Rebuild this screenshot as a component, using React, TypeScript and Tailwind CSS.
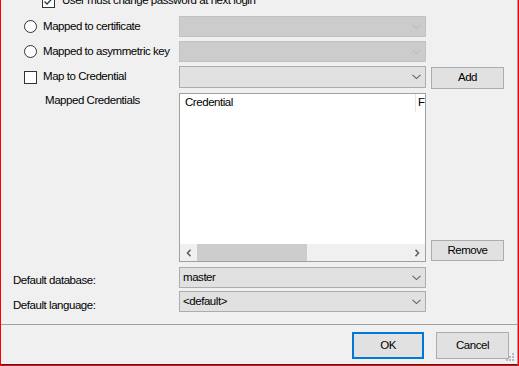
import React from "react";

const font = { fontFamily: '"Liberation Sans", Arial, sans-serif' };

function Chevron({ color }: { color: string }) {
  return (
    <svg width="9" height="6" viewBox="0 0 9 6">
      <path d="M0.5 0.8 L4.5 4.6 L8.5 0.8" fill="none" stroke={color} strokeWidth="1.1" />
    </svg>
  );
}

function Combo({ text, disabled, h = "h-[21px]" }: { text?: string; disabled?: boolean; h?: string }) {
  return (
    <div
      className={`w-[247px] ${h} shrink-0 flex items-center justify-between pl-[3px] pr-[4px] border ${
        disabled ? "bg-[#cccccc] border-[#c2c2c2]" : "bg-[#e1e1e1] border-[#adadad]"
      }`}
    >
      <span className="leading-none">{text}</span>
      <Chevron color={disabled ? "#bdbdbd" : "#606060"} />
    </div>
  );
}

function Btn({ label, className = "" }: { label: string; className?: string }) {
  return (
    <div
      className={`flex items-center justify-center bg-[#e1e1e1] border border-[#adadad] leading-none ${className}`}
    >
      {label}
    </div>
  );
}

function Radio() {
  return <div className="w-[13px] h-[13px] rounded-full border border-[#333333] bg-white shrink-0" />;
}

function CheckBox({ checked }: { checked?: boolean }) {
  return (
    <div className="w-[13px] h-[13px] border border-[#333333] bg-white shrink-0 flex items-center justify-center">
      {checked && (
        <svg width="11" height="11" viewBox="0 0 11 11">
          <path d="M1.5 5.5 L4 8 L9.5 2.2" fill="none" stroke="#333333" strokeWidth="1.3" />
        </svg>
      )}
    </div>
  );
}

export default function App() {
  return (
    <div
      className="w-[519px] h-[366px] bg-[#f0f0f0] border-l border-r border-b border-[#ff0000] overflow-hidden flex flex-col text-[11.5px] tracking-[-0.45px] text-[#000000]"
      style={font}
    >
      <div className="relative flex-1 flex flex-col border-r border-b border-r-[#a0a0a0] border-b-[#2b2b2b] overflow-hidden">
        {/* top checkbox */}
        <div className="-mt-[5px] h-[13px] flex items-center pl-[41px] gap-[7px] shrink-0">
          <CheckBox checked />
          <span className="leading-none -mt-[1px]">User must change password at next login</span>
        </div>

        {/* radio rows */}
        <div className="mt-[8px] h-[21px] flex items-center shrink-0">
          <div className="w-[178px] flex items-center pl-[23px] gap-[6px]">
            <Radio />
            <span className="leading-none">Mapped to certificate</span>
          </div>
          <Combo disabled />
        </div>
        <div className="mt-[4px] h-[21px] flex items-center shrink-0">
          <div className="w-[178px] flex items-center pl-[23px] gap-[6px]">
            <Radio />
            <span className="leading-none">Mapped to asymmetric key</span>
          </div>
          <Combo disabled />
        </div>

        {/* map to credential */}
        <div className="mt-[4px] h-[22px] flex items-start shrink-0">
          <div className="w-[178px] h-[22px] flex items-center pl-[23px] gap-[6px]">
            <CheckBox />
            <span className="leading-none">Map to Credential</span>
          </div>
          <Combo h="h-[22px]" />
          <Btn label="Add" className="ml-[5px] mt-[1px] w-[73px] h-[22px]" />
        </div>

        {/* mapped credentials list */}
        <div className="mt-[5px] h-[169px] flex shrink-0">
          <div className="w-[178px] pl-[44px] pt-[2px] leading-none">Mapped Credentials</div>
          <div className="w-[247px] h-[169px] border border-[#a0a0a0] bg-white flex flex-col overflow-hidden">
            <div className="h-[18px] flex shrink-0 overflow-hidden">
              <div className="w-[236px] shrink-0 border-r border-[#e5e5e5] pl-[5px] pt-[3px] leading-none">Credential</div>
              <div className="pl-[2px] pt-[3px] leading-none">F</div>
            </div>
            <div className="flex-1" />
            <div className="h-[17px] flex bg-[#f0f0f0] shrink-0">
              <div className="w-[17px] flex items-center justify-center">
                <svg width="6" height="8" viewBox="0 0 6 8">
                  <path d="M4.5 0.8 L1.5 4 L4.5 7.2" fill="none" stroke="#606060" strokeWidth="1.6" />
                </svg>
              </div>
              <div className="w-[110px] bg-[#cdcdcd]" />
              <div className="flex-1" />
              <div className="w-[17px] flex items-center justify-center">
                <svg width="6" height="8" viewBox="0 0 6 8">
                  <path d="M1.5 0.8 L4.5 4 L1.5 7.2" fill="none" stroke="#606060" strokeWidth="1.6" />
                </svg>
              </div>
            </div>
          </div>
          <div className="flex flex-col justify-end pb-[1px]">
            <Btn label="Remove" className="ml-[5px] w-[73px] h-[21px]" />
          </div>
        </div>

        {/* defaults */}
        <div className="mt-[5px] h-[21px] flex items-center shrink-0">
          <div className="w-[178px] pl-[12px] pt-[6px] leading-none">Default database:</div>
          <Combo text="master" />
        </div>
        <div className="mt-[3px] h-[21px] flex items-center shrink-0">
          <div className="w-[178px] pl-[12px] pt-[8px] leading-none">Default language:</div>
          <Combo text="<default>" />
        </div>

        {/* separator */}
        <div className="mt-[12px] h-px bg-[#a0a0a0] shrink-0" />

        {/* buttons */}
        <div className="mt-[7px] flex justify-end pr-[8px] gap-[12px] shrink-0">
          <div className="w-[72px] h-[27px] flex items-center justify-center bg-[#e1e1e1] border-2 border-[#0078d7] leading-none">
            OK
          </div>
          <Btn label="Cancel" className="w-[73px] h-[27px]" />
        </div>

        {/* size grip */}
        <svg className="absolute right-[2px] bottom-[2px]" width="9" height="9" viewBox="0 0 9 9">
          <rect x="6" y="0" width="2" height="2" fill="#b8b8b8" />
          <rect x="3" y="3" width="2" height="2" fill="#b8b8b8" />
          <rect x="6" y="3" width="2" height="2" fill="#b8b8b8" />
          <rect x="0" y="6" width="2" height="2" fill="#b8b8b8" />
          <rect x="3" y="6" width="2" height="2" fill="#b8b8b8" />
          <rect x="6" y="6" width="2" height="2" fill="#b8b8b8" />
        </svg>
      </div>
    </div>
  );
}
